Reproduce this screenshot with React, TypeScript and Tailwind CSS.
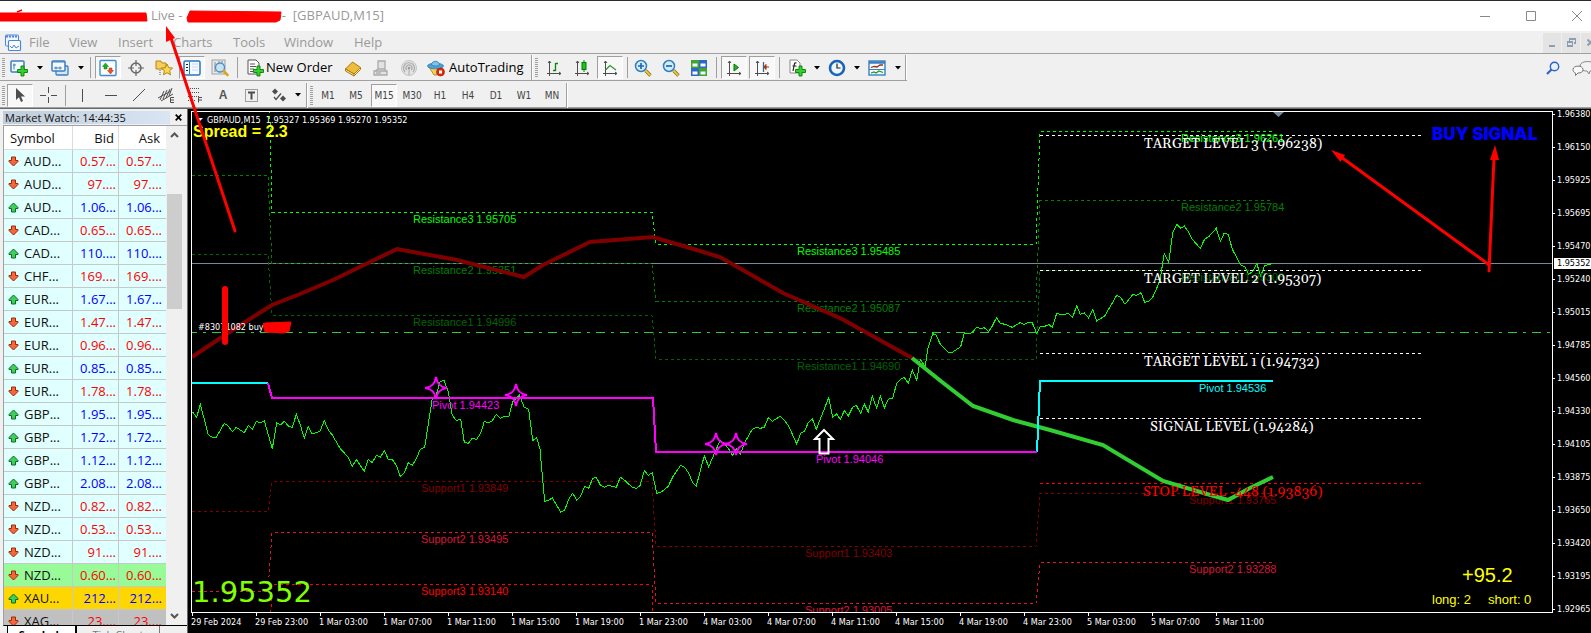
import type { ReactNode } from 'react';

type Pt = [number, number];

const GRAY = '#4d4d4d';

/* ---------- toolbar primitives ---------- */

function Icon({ children, size = 18 }: { children: ReactNode; size?: number }) {
  return (
    <svg width={size} height={size} viewBox="0 0 18 18" fill="none" className="shrink-0" aria-hidden="true">
      {children}
    </svg>
  );
}

function Tool({ label, pressed, children }: { label: string; pressed?: boolean; children: ReactNode }) {
  return (
    <button
      type="button"
      aria-label={label}
      className={
        pressed
          ? 'mx-px flex h-[23px] w-[26px] shrink-0 items-center justify-center border border-r-white border-b-white border-l-[#a0a0a0] border-t-[#a0a0a0] bg-[#f8f8f8]'
          : 'flex h-[23px] w-7 shrink-0 items-center justify-center'
      }
    >
      {children}
    </button>
  );
}

function Caret() {
  return (
    <svg width="6" height="4" viewBox="0 0 6 4" className="shrink-0" aria-hidden="true">
      <path d="M0 0h6L3 3.5z" fill="#000" />
    </svg>
  );
}

function Handle() {
  return (
    <svg width="3" height="19" viewBox="0 0 3 19" className="shrink-0" shapeRendering="crispEdges" aria-hidden="true">
      <path d="M1.5 0v19" stroke="#a0a0a0" strokeWidth="3" strokeDasharray="1 1" />
    </svg>
  );
}

function Sep() {
  return <div className="mx-[3px] h-[21px] w-px shrink-0 bg-[#a0a0a0]" />;
}

function Edge() {
  return <div className="h-[25px] w-[2px] shrink-0 border-l border-[#a0a0a0] bg-white" />;
}

/* ---------- icons ---------- */

const plus = 'M11 7h3v3.500h3.500v3H14V17h-3v-3.500H7.500v-3H11z';
const star4 = 'M0-11C1-4 4-1 11 0C4 1 1 4 0 11C-1 4-4 1-11 0C-4-1-1-4 0-11Z';

const NewChart = () => (
  <Icon>
    <rect x="1" y="2" width="13" height="11" rx="1" fill="#f4faff" stroke="#3b7fbf" strokeWidth="1.500" />
    <path d="M3 6h3M4 4.500v6" stroke="#3b7fbf" />
    <path d={plus} fill="#2fd42f" stroke="#0b7a0b" strokeWidth=".9" />
  </Icon>
);
const Profiles = () => (
  <Icon>
    <rect x="5" y="7" width="12" height="9" rx="1" fill="#d5e6f5" stroke="#3b7fbf" strokeWidth="1.300" />
    <rect x="1" y="2" width="13" height="10" rx="1" fill="#f4faff" stroke="#3b7fbf" strokeWidth="1.500" />
    <path d="M1 3h13M3 9h8M5 7.500v3M9 7.500v3" stroke="#3b7fbf" />
  </Icon>
);
const WatchIcon = () => (
  <Icon>
    <rect x="1" y="1.500" width="16" height="15" rx="1" fill="#fff" stroke="#3b8fd0" strokeWidth="1.400" />
    <path d="M3.500 7.500 6.500 4l3 3.500H8V10H5V7.500z" fill="#1fae1f" stroke="#0b7a0b" strokeWidth=".5" />
    <path d="M8.500 11.500H10V9h3v2.500h1.500l-3 3.500z" fill="#f0502a" stroke="#a03010" strokeWidth=".5" />
  </Icon>
);
const Target = () => (
  <Icon>
    <circle cx="9" cy="9" r="5" stroke="#666" strokeWidth="1.500" />
    <path d="M9 1v6M9 11v6M1 9h6M11 9h6" stroke="#666" strokeWidth="1.200" />
  </Icon>
);
const FolderStar = () => (
  <Icon>
    <path d="M1 2h5l1 2h4v6H1z" fill="#f5cf5a" stroke="#b8860b" />
    <path d="M5 11v6" stroke="#555" strokeDasharray="1 1" />
    <path d="m12 5 1.700 3.700 3.900.4-3 2.600.9 4.100L12 13.700l-3.500 2.100.9-4.100-3-2.600 3.900-.4z" fill="#ffd84a" stroke="#a87a10" strokeWidth=".9" />
  </Icon>
);
const NavIcon = () => (
  <Icon>
    <rect x="1" y="2" width="16" height="14" rx="1.500" fill="#f4faff" stroke="#2c75bb" strokeWidth="1.500" />
    <path d="M3 5.500h2M3 8.500h2M3 11.500h2" stroke="#222" />
    <path d="M6.500 3v12" stroke="#2c75bb" />
    <path d="M9 5h6M9 8h6M9 11h6" stroke="#c7dced" />
  </Icon>
);
const Tester = () => (
  <Icon>
    <rect x="1" y="1" width="13" height="14" fill="#e9e9e9" stroke="#a0a0a0" />
    <path d="M4 3v10M8 2v4M11 2v4" stroke="#888" />
    <circle cx="9" cy="8.500" r="4.500" fill="#bfe0f7" fillOpacity=".85" stroke="#4a90c8" strokeWidth="1.300" />
    <path d="m12.500 12 4 4" stroke="#d9a520" strokeWidth="2.500" strokeLinecap="round" />
  </Icon>
);
const OrderIcon = () => (
  <Icon>
    <path d="M2 1h8l3 3v11H2z" fill="#fff" stroke="#555" />
    <path d="M4 5h5M4 7.500h6M4 10h4M4 12.500h3" stroke="#555" />
    <path d={plus} fill="#2fd42f" stroke="#0b7a0b" strokeWidth=".9" />
  </Icon>
);
const BookIcon = () => (
  <Icon>
    <path d="m1.500 10 7-7 8 5.500-6.500 6.500z" fill="#f0bd3a" stroke="#a8760c" />
    <path d="M1.500 10v2l8.500 5v-2zM10 17l6.500-6.500v-2" fill="#fbe9b0" stroke="#a8760c" />
  </Icon>
);
const ServerIcon = () => (
  <Icon>
    <path d="M6 2h7v8H6zM2 12h13v4H2zM6 10l-3 2M13 10l1 2" fill="#e2e2e2" stroke="#aaa" strokeWidth="1.300" />
    <path d="M4 14h5" stroke="#999" />
  </Icon>
);
const SignalIcon = () => (
  <Icon>
    <circle cx="9" cy="9" r="7.500" fill="#e3e3e3" stroke="#c4c4c4" />
    <path d="M5 13a5.500 5.500 0 1 1 8 0M6.800 11a3 3 0 1 1 4.400 0" stroke="#aaa" strokeWidth="1.200" />
    <circle cx="9" cy="9" r="1.300" fill="#999" />
    <path d="M9 10v6" stroke="#aaa" />
  </Icon>
);
const AutoIcon = () => (
  <Icon>
    <path d="M2 8h13l-5 8H7z" fill="#f2cf55" stroke="#b8902a" />
    <ellipse cx="8.500" cy="7" rx="8" ry="2.800" fill="#4fa3d8" stroke="#2a78ad" strokeWidth=".8" />
    <path d="M4.500 6C4.500 1 12.500 1 12.500 6c-2 1.500-6 1.500-8 0z" fill="#7cc3ec" stroke="#2a78ad" strokeWidth=".8" />
    <circle cx="13.500" cy="13" r="4" fill="#e02a10" stroke="#a01500" strokeWidth=".6" />
    <rect x="12" y="11.500" width="3" height="3" fill="#fff" />
  </Icon>
);
const axes = 'M4.500 2v15M2 14.500h14M3 4l1.500-2L6 4M14 13l2 1.500-2 1.500';
const BarsIcon = () => (
  <Icon>
    <path d={axes} stroke={GRAY} />
    <path d="M10.500 4v8M10.500 4.500h2.500M8 11.500h2.500" stroke="#008a00" strokeWidth="1.300" />
  </Icon>
);
const CandleIcon = () => (
  <Icon>
    <path d={axes} stroke={GRAY} />
    <path d="M11 1v12" stroke="#008a00" />
    <rect x="9" y="3.500" width="4" height="7" fill="#22c322" stroke="#007a00" />
  </Icon>
);
const LineIcon = () => (
  <Icon>
    <path d={axes} stroke={GRAY} />
    <path d="M4.500 11 9 6.500 15 11" stroke="#2a9a2a" strokeWidth="1.300" />
  </Icon>
);
const Zoom = ({ plusSign }: { plusSign?: boolean }) => (
  <Icon>
    <circle cx="7" cy="7" r="5.500" fill="#d3ecfb" stroke="#2f7fc0" strokeWidth="1.500" />
    <path d={plusSign ? 'M4 7h6M7 4v6' : 'M4 7h6'} stroke="#2468a8" strokeWidth="1.700" />
    <path d="m11.500 11.500 5 5" stroke="#8a6a10" strokeWidth="3.200" />
    <path d="m11.500 11.500 4.800 4.800" stroke="#f0c840" strokeWidth="1.800" />
  </Icon>
);
const Tile = () => (
  <Icon>
    <rect x="1" y="1" width="8" height="8" fill="#3fa52c" />
    <rect x="9" y="1" width="8" height="8" fill="#2f66c8" />
    <rect x="1" y="9" width="8" height="8" fill="#2f66c8" />
    <rect x="9" y="9" width="8" height="8" fill="#3fa52c" />
    <path d="M2.500 4.500h5v3h-5zM10.500 4.500h5v3h-5zM2.500 12.500h5v3h-5zM10.500 12.500h5v3h-5z" fill="#f4faff" />
  </Icon>
);
const ScrollIcon = () => (
  <Icon>
    <path d={axes} stroke={GRAY} />
    <path d="M9 5v7l4.500-3.500z" fill="#22b522" stroke="#007a00" />
  </Icon>
);
const ShiftIcon = () => (
  <Icon>
    <path d={axes} stroke={GRAY} />
    <path d="M10.500 3v10" stroke="#2f66a8" strokeWidth="1.300" />
    <path d="M16 8h-3V5.500L11 8l2 2.500V8" fill="#c04010" stroke="#a03000" />
  </Icon>
);
const Indicators = () => (
  <Icon>
    <path d="M2 1h7l3 3v10H2z" fill="#fff" stroke="#888" />
    <path d="M8.500 4c-2-.5-2 0-2.500 3l-1 5M4.500 7h4" stroke="#222" strokeWidth="1.200" />
    <path d={plus} fill="#2fd42f" stroke="#0b7a0b" strokeWidth=".9" />
  </Icon>
);
const Clock = () => (
  <Icon>
    <circle cx="9" cy="9" r="7" fill="#eef6fc" stroke="#1763b8" strokeWidth="2.600" />
    <path d="M9 4.500V9h3.500" stroke="#222" strokeWidth="1.200" />
  </Icon>
);
const Template = () => (
  <Icon>
    <rect x="1" y="2" width="16" height="14" fill="#f4faff" stroke="#3b7fbf" strokeWidth="1.400" />
    <path d="M1 3.500h16" stroke="#3b7fbf" strokeWidth="2.500" />
    <path d="M1 10.500h16" stroke="#3b7fbf" />
    <path d="m3 8.500 3-1 3 .5 3-2h3" stroke="#a03010" strokeWidth="1.300" />
    <path d="m3 14 3-1 2 1 3-2 4 1.500" stroke="#1f9a1f" strokeWidth="1.300" />
  </Icon>
);

/* ---------- toolbars ---------- */

function StandardBar() {
  return (
    <div className="flex h-[26px] items-center border-b border-[#a0a0a0]">
      <div className="w-[2px] shrink-0" />
      <Handle />
      <Tool label="New chart"><NewChart /></Tool>
      <div className="flex w-[13px] justify-center"><Caret /></div>
      <Tool label="Profiles"><Profiles /></Tool>
      <div className="flex w-[13px] justify-center"><Caret /></div>
      <Sep />
      <Tool label="Market Watch" pressed><WatchIcon /></Tool>
      <Tool label="Data Window"><Target /></Tool>
      <Tool label="Navigator"><FolderStar /></Tool>
      <Tool label="Terminal" pressed><NavIcon /></Tool>
      <Tool label="Strategy Tester"><Tester /></Tool>
      <Sep />
      <button type="button" className="flex h-[23px] w-[98px] shrink-0 items-center gap-[2px] pl-[5px] text-[13px] text-black">
        <OrderIcon />
        <span className="whitespace-nowrap">New Order</span>
      </button>
      <Tool label="MetaEditor"><BookIcon /></Tool>
      <Tool label="Virtual Hosting"><ServerIcon /></Tool>
      <Tool label="Signals"><SignalIcon /></Tool>
      <button type="button" className="flex h-[23px] w-[108px] shrink-0 items-center gap-1 pl-[4px] text-[13px] text-black">
        <AutoIcon />
        <span className="whitespace-nowrap">AutoTrading</span>
      </button>
      <Edge />
      <div className="w-[2px] shrink-0" />
      <Handle />
      <div className="w-[2px] shrink-0" />
      <Tool label="Bar Chart"><BarsIcon /></Tool>
      <Tool label="Candlesticks"><CandleIcon /></Tool>
      <Tool label="Line Chart" pressed><LineIcon /></Tool>
      <div className="ml-[3px] mr-px h-[21px] w-px shrink-0 bg-[#a0a0a0]" />
      <Tool label="Zoom In"><Zoom plusSign /></Tool>
      <Tool label="Zoom Out"><Zoom /></Tool>
      <Tool label="Tile Windows"><Tile /></Tool>
      <Sep />
      <Tool label="Auto Scroll" pressed><ScrollIcon /></Tool>
      <Tool label="Chart Shift" pressed><ShiftIcon /></Tool>
      <Sep />
      <Tool label="Indicators"><Indicators /></Tool>
      <div className="flex w-[12px] justify-center"><Caret /></div>
      <Tool label="Periods"><Clock /></Tool>
      <div className="flex w-[12px] justify-center"><Caret /></div>
      <Tool label="Templates"><Template /></Tool>
      <div className="flex w-[14px] justify-center"><Caret /></div>
      <Edge />
    </div>
  );
}

const frames = ['M1', 'M5', 'M15', 'M30', 'H1', 'H4', 'D1', 'W1', 'MN'];

function LineStudiesBar() {
  return (
    <div className="flex h-[26px] items-center pt-[2px]">
      <div className="w-[2px] shrink-0" />
      <Handle />
      <div className="w-px shrink-0" />
      <Tool label="Cursor" pressed>
        <Icon><path d="M5 2v12l3-2.700 2 4.700 2-1-2-4.500h4z" fill={GRAY} /></Icon>
      </Tool>
      <Tool label="Crosshair">
        <Icon><path d="M9.500 1v6M9.500 11v6M1 9.500h6M12 9.500h6" stroke={GRAY} /></Icon>
      </Tool>
      <Sep />
      <Tool label="Vertical Line"><Icon><path d="M8.500 3v13" stroke={GRAY} /></Icon></Tool>
      <Tool label="Horizontal Line"><Icon><path d="M3 9.500h12" stroke={GRAY} /></Icon></Tool>
      <Tool label="Trendline"><Icon><path d="M3 15 15 3" stroke={GRAY} /></Icon></Tool>
      <Tool label="Equidistant Channel">
        <Icon>
          <path d="M0 12 13 5M3 15 15 8M2 14l4-9M5 13l4-9M8 12l4-9M11 10l3-8" stroke={GRAY} />
          <path d="M16 11.500h-3.500v5H16M12.500 14H16" stroke={GRAY} />
        </Icon>
      </Tool>
      <Tool label="Fibonacci Retracement">
        <Icon>
          <path d="M2 2.500h12M2 6.500h12M2 10.500h12M2 14.500h8" stroke={GRAY} strokeDasharray="1 1" />
          <path d="M16 11.500h-3.500v5M12.500 14H16" stroke={GRAY} />
        </Icon>
      </Tool>
      <Tool label="Text">
        <span className="font-['Liberation_Sans'] text-[12px] font-bold text-[#555]">A</span>
      </Tool>
      <Tool label="Text Label">
        <Icon>
          <rect x="3.500" y="3.500" width="12" height="12" stroke={GRAY} strokeDasharray="1 1" />
          <path d="M6 6.500h7M9.500 6.500v7" stroke={GRAY} strokeWidth="2" />
        </Icon>
      </Tool>
      <Tool label="Arrows">
        <Icon>
          <path d="m2 5.500 3-3 3 3-3 3zM10 12.500l3-3 3 3-3 3z" fill={GRAY} />
          <path d="m4 11 2 2.500 5-6" stroke={GRAY} strokeWidth="1.300" />
        </Icon>
      </Tool>
      <div className="flex w-[9px] shrink-0 justify-center"><Caret /></div>
      <div className="w-1 shrink-0" />
      <Edge />
      <div className="w-[2px] shrink-0" />
      <Handle />
      <div className="w-px shrink-0" />
      {frames.map((f) => (
        <Tool key={f} label={f} pressed={f === 'M15'}>
          <span className="font-['DejaVu_Sans_Condensed','Noto_Sans',sans-serif] text-[10px] text-[#444]">{f}</span>
        </Tool>
      ))}
      <Edge />
    </div>
  );
}

/* ---------- market watch ---------- */

const quotes: [string, string, string, 'up' | 'down', string?][] = [
  ['AUD...', '0.57...', '0.57...', 'down'],
  ['AUD...', '97....', '97....', 'down'],
  ['AUD...', '1.06...', '1.06...', 'up'],
  ['CAD...', '0.65...', '0.65...', 'down'],
  ['CAD...', '110....', '110....', 'up'],
  ['CHF...', '169....', '169....', 'down'],
  ['EUR...', '1.67...', '1.67...', 'up'],
  ['EUR...', '1.47...', '1.47...', 'down'],
  ['EUR...', '0.96...', '0.96...', 'down'],
  ['EUR...', '0.85...', '0.85...', 'up'],
  ['EUR...', '1.78...', '1.78...', 'down'],
  ['GBP...', '1.95...', '1.95...', 'up'],
  ['GBP...', '1.72...', '1.72...', 'up'],
  ['GBP...', '1.12...', '1.12...', 'up'],
  ['GBP...', '2.08...', '2.08...', 'up'],
  ['NZD...', '0.82...', '0.82...', 'down'],
  ['NZD...', '0.53...', '0.53...', 'down'],
  ['NZD...', '91....', '91....', 'down'],
  ['NZD...', '0.60...', '0.60...', 'down', 'bg-[#98fb98]'],
  ['XAU...', '212...', '212...', 'up', 'bg-[#ffd700]'],
  ['XAG...', '23....', '23....', 'down', 'bg-[#c0c0c0]'],
];

function Direction({ up }: { up: boolean }) {
  return (
    <svg width="11" height="11" viewBox="0 0 11 11" className="shrink-0" aria-hidden="true">
      {up ? (
        <path d="M5.500 1 10 5.500v1H7.500V10h-4V6.500H1v-1z" fill="#3ccf5c" stroke="#0a6b22" strokeWidth="1" />
      ) : (
        <path d="M5.500 10 1 5.500v-1h2.500V1h4v3.500H10v1z" fill="#f5673a" stroke="#9c2a08" strokeWidth="1" />
      )}
    </svg>
  );
}

function MarketWatch() {
  return (
    <aside className="flex w-[188px] shrink-0 flex-col overflow-hidden border-r border-[#696969] bg-[#f0f0f0] pl-[3px]">
      <div className="flex h-4 shrink-0 items-center justify-between pr-[2px]">
        <h2 className="h-[13px] w-[167px] whitespace-nowrap bg-linear-to-r from-[#bfcddb] to-[#d9e5f2] pl-[2px] text-[11px] leading-[13px] text-[#111]">
          Market Watch: 14:44:35
        </h2>
        <button type="button" aria-label="Close Market Watch" className="mr-px flex h-3 w-3 items-center justify-center">
          <svg width="7" height="7" viewBox="0 0 7 7"><path d="m.7.7 5.600 5.600M6.300.7.7 6.300" stroke="#000" strokeWidth="1.700" /></svg>
        </button>
      </div>
      <div className="flex min-h-0 flex-1 border-b border-l border-t border-b-black border-l-[#a0a0a0] border-t-[#a0a0a0]">
        <div className="w-[162px] shrink-0 overflow-hidden">
          <table className="w-full table-fixed border-separate border-spacing-0 text-[13px] leading-[22px]">
            <thead>
              <tr className="bg-white text-[#111]">
                <th className="h-6 w-[69px] border-b border-r border-[#dcdcdc] p-0 pl-[6px] text-left font-normal">Symbol</th>
                <th className="h-6 w-[46px] border-b border-r border-[#dcdcdc] p-0 pr-1 text-right font-normal">Bid</th>
                <th className="h-6 border-b border-[#dcdcdc] p-0 pr-[6px] text-right font-normal">Ask</th>
              </tr>
            </thead>
            <tbody>
              {quotes.map(([sym, bid, ask, dir, bg], i) => (
                <tr key={i} className={bg ?? 'bg-[#e0ffff]'}>
                  <td className="h-[23px] border-b border-r border-[#c8c8c8] p-0">
                    <div className="flex items-center gap-1 pl-1 text-[#111]">
                      <Direction up={dir === 'up'} />
                      <span className="pl-px">{sym}</span>
                    </div>
                  </td>
                  <td className={dir === 'up' ? 'border-b border-r border-[#c8c8c8] p-0 pr-[2px] text-right text-[#0000ff]' : 'border-b border-r border-[#c8c8c8] p-0 pr-[2px] text-right text-[#ff0000]'}>{bid}</td>
                  <td className={dir === 'up' ? 'border-b border-[#c8c8c8] p-0 pr-1 text-right text-[#0000ff]' : 'border-b border-[#c8c8c8] p-0 pr-1 text-right text-[#ff0000]'}>{ask}</td>
                </tr>
              ))}
            </tbody>
          </table>
        </div>
        <div className="flex w-[17px] flex-col items-center justify-between py-[6px]">
          <svg width="9" height="6" viewBox="0 0 9 6" fill="none"><path d="m1 5 3.500-3.500L8 5" stroke="#555" strokeWidth="2" /></svg>
          <div className="mt-[56px] h-[115px] w-[15px] bg-[#cdcdcd]" />
          <div className="flex-1" />
          <svg width="9" height="6" viewBox="0 0 9 6" fill="none"><path d="M1 1l3.500 3.500L8 1" stroke="#555" strokeWidth="2" /></svg>
        </div>
      </div>
      <div className="flex h-[7px] shrink-0 pl-1 text-[11px] leading-[18px]">
        <div className="h-5 w-[70px] border-l border-r-2 border-black bg-white text-center font-bold text-black">Symbols</div>
        <div className="h-5 w-[83px] border-r border-[#777] text-center text-[#777]">Tick Chart</div>
      </div>
    </aside>
  );
}

/* ---------- chart ---------- */

const prices = ['1.96380', '1.96150', '1.95925', '1.95695', '1.95470', '1.95240', '1.95015', '1.94785', '1.94560', '1.94330', '1.94105', '1.93875', '1.93650', '1.93420', '1.93195', '1.92965'];

const times = ['29 Feb 2024', '29 Feb 23:00', '1 Mar 03:00', '1 Mar 07:00', '1 Mar 11:00', '1 Mar 15:00', '1 Mar 19:00', '1 Mar 23:00', '4 Mar 03:00', '4 Mar 07:00', '4 Mar 11:00', '4 Mar 15:00', '4 Mar 19:00', '4 Mar 23:00', '5 Mar 03:00', '5 Mar 07:00', '5 Mar 11:00'];

const AXIS_FONT = "'DejaVu Sans Condensed', 'Noto Sans', sans-serif";
const ARIAL = "'Liberation Sans', Arial, sans-serif";
const SERIF = "Gelasio, 'Liberation Serif', serif";

/* Series samples are stored at three units per pixel, relative to a block origin. */
const series: { x: number; y: number; pts: Pt[] }[] = [
  {
    x: 0, y: 370,
    pts: [[577,125],[590,142],[601,103],[625,194],[637,202],[649,202],[673,160],[685,168],[697,185],[709,172],[733,188],[745,166],[757,178],[769,154],[781,158],[793,152],[817,236],[830,158],[841,165],[853,154],[865,168]],
  },
  {
    x: 290, y: 370,
    pts: [[7,172],[19,133],[31,165],[43,205],[55,170],[67,192],[90,184],[103,152],[115,180],[127,195],[151,236],[175,262],[187,290],[199,268],[223,304],[235,268],[247,278],[259,256],[271,262],[283,242],[295,268],[307,268],[319,286],[331,319],[343,308],[355,278],[367,286],[379,266],[391,238],[404,232],[427,85],[439,75],[450,36],[462,30],[475,66],[487,136],[499,151],[512,148],[523,217],[535,220],[547,205],[560,208],[572,190],[583,154],[595,158],[607,152],[619,133],[631,145],[643,139],[656,141],[668,96],[688,75],[703,112],[716,118],[728,212],[740,203],[750,238],[764,394],[776,391],[787,383],[812,427],[824,420],[836,388],[848,370],[860,391],[872,378],[884,349],[896,355],[908,325],[919,322],[931,345],[943,352],[955,346],[979,352],[991,322],[1003,330],[1027,352],[1040,355],[1050,347],[1063,302],[1075,316],[1087,308],[1100,370],[1112,367]],
  },
  {
    x: 660, y: 370,
    pts: [[24,350],[40,318],[62,286],[74,292],[86,310],[98,338],[109,348],[133,257],[146,290],[157,265],[180,212],[192,220],[205,235],[218,257],[229,235],[241,253],[253,220],[277,178],[289,172],[301,175],[313,172],[325,143],[337,154],[360,139],[372,150],[385,166],[410,222],[422,190],[433,184],[445,158],[457,146],[469,178],[506,83],[518,142],[530,132],[541,148],[553,122],[565,138],[578,111],[589,106],[602,130]],
  },
  {
    x: 850, y: 200,
    pts: [[43,612],[55,636],[67,588],[80,625],[91,588],[103,624],[115,598],[128,594],[140,550],[152,538],[163,532],[175,550],[187,510],[200,541],[211,478],[225,500],[235,440],[248,401],[258,405],[272,435],[295,457],[307,457],[332,440],[343,398],[356,402],[368,396],[380,382],[392,386],[403,383],[416,395],[427,378],[440,352],[450,370],[465,373],[487,382],[510,368],[522,373],[535,367],[547,368],[560,400],[571,380],[584,379],[597,374],[607,382],[620,340],[632,344],[656,341],[668,352],[680,317],[691,343],[703,339],[716,354],[728,328],[740,363],[764,348],[800,286],[812,292],[825,313],[848,284],[860,286],[873,278],[884,307],[896,304],[908,292],[920,265],[930,240],[943,160],[956,188],[968,98],[980,73],[992,85],[1003,78],[1015,95],[1027,118],[1051,145],[1064,117],[1076,110],[1099,85],[1111,124],[1123,99],[1135,103],[1147,148],[1159,170],[1171,194],[1184,200],[1196,222],[1208,215],[1220,190],[1232,228],[1244,196],[1258,194],[1265,190]],
  },
];

const pricePath = series
  .flatMap((s) => s.pts.map(([x, y]) => `${(s.x + x / 3).toFixed(1)},${(s.y + y / 3).toFixed(1)}`))
  .join(' ');

const levels: { color: string; ys: [number, number, number, number]; labels: [string, number, number][] }[] = [
  { color: '#00ff00', ys: [30, 212, 244, 131], labels: [['Resistance3 1.95705', 413, 223], ['Resistance3 1.95485', 797, 255], ['Resistance3 1.96261', 1181, 142]] },
  { color: '#008000', ys: [175, 263, 301, 200], labels: [['Resistance2 1.95351', 413, 274], ['Resistance2 1.95087', 797, 312], ['Resistance2 1.95784', 1181, 211]] },
  { color: '#006400', ys: [254, 315, 359, 270], labels: [['Resistance1 1.94996', 413, 326], ['Resistance1 1.94690', 797, 370], ['Resistance1 1.95308', 1181, 281]] },
  { color: '#800000', ys: [511, 481, 546, 493], labels: [['Support1 1.93849', 421, 492], ['Support1 1.93403', 805, 557], ['Support1 1.93765', 1189, 504]] },
  { color: '#dc143c', ys: [591, 532, 603, 562], labels: [['Support2 1.93495', 421, 543], ['Support2 1.93005', 805, 614], ['Support2 1.93288', 1189, 573]] },
  { color: '#ff0000', ys: [680, 584, 700, 680], labels: [['Support3 1.93140', 421, 595]] },
];

const targets: [string, string, number, number][] = [
  ['TARGET LEVEL 3 (1.96238)', '#ffffff', 1144, 135],
  ['TARGET LEVEL 2 (1.95307)', '#ffffff', 1144, 270],
  ['TARGET LEVEL 1 (1.94732)', '#ffffff', 1144, 353],
  ['SIGNAL LEVEL (1.94284)', '#ffffff', 1150, 418],
  ['STOP LEVEL -448 (1.93836)', '#ff0000', 1143, 483],
];

const stars: Pt[] = [[436, 388], [516, 395], [716, 444], [736, 444]];

function Plot() {
  return (
    <svg className="block h-full w-full" role="img" aria-label="GBPAUD M15 line chart">
      <g transform="translate(-192 -112)" fill="none">
        <g shapeRendering="crispEdges">
          <path d="M192 263.500H3000" stroke="#778899" />
          <path d="M192 332.500H3000" stroke="#32cd32" strokeDasharray="9 6 3 6" strokeDashoffset="4" />
          {levels.map(({ color, ys: [a, b, c, d] }) => (
            <path
              key={color}
              d={`M192 ${a}.5H268L272 ${b}.5H652L656 ${c}.5H1036L1040 ${d}.5H1273`}
              stroke={color}
              strokeDasharray="3 3"
            />
          ))}
          {targets.map(([t, color, , y]) => (
            <path key={t} d={`M1040 ${y}.5H1422`} stroke={color} strokeDasharray="3 3" />
          ))}
          <polyline points={pricePath} stroke="#00ff00" />
        </g>

        <g fontFamily={ARIAL} fontSize="11">
          {levels.flatMap(({ color, labels }) =>
            labels.map(([t, x, y]) => (
              <text key={t} x={x} y={y} fill={color}>{t}</text>
            )),
          )}
        </g>

        <polyline points="192,357 225,335 272,305 300,294 333,280 397,249 457,260 524,277 543,265 590,242 653,237 690,248 720,257 783,293 842,319 912,358" stroke="#800000" strokeWidth="4" />
        <polyline points="912,358 942,382 973,406 1013,420 1050,430 1103,445 1163,481 1207,494 1228,500 1250,488 1273,477" stroke="#32cd32" strokeWidth="4" />
        <g strokeWidth="2" shapeRendering="crispEdges">
          <path d="M192 383H268M1037 452L1040 381H1273" stroke="#00ffff" />
          <path d="M268 383L272 398H653L656 452H1037" stroke="#ff00ff" />
        </g>
        {stars.map(([x, y]) => (
          <path key={x} d={star4} transform={`translate(${x} ${y})`} stroke="#ff00ff" strokeWidth="2" />
        ))}
        <path d="M824 430l9 9h-4.500v14.500h-9V439H815z" stroke="#fff" strokeWidth="2" />

        <g fontFamily={ARIAL} fontSize="11">
          <text x="432" y="409" fill="#ff00ff">Pivot 1.94423</text>
          <text x="816" y="463" fill="#ff00ff">Pivot 1.94046</text>
          <text x="1199" y="392" fill="#00ffff">Pivot 1.94536</text>
        </g>
        <g fontFamily={SERIF} fontSize="14">
          {targets.map(([t, color, x, y]) => (
            <text key={t} x={x} y={y + 13} fill={color}>{t}</text>
          ))}
        </g>

        <path d="M1273 112h11l-5.500 5z" fill="#778899" />
        <path d="M197 118h6l-3 3z" fill="#fff" />
        <text x="207" y="123" fill="#fff" fontFamily={AXIS_FONT} fontSize="9" xmlSpace="preserve">GBPAUD,M15  1.95327 1.95369 1.95270 1.95352</text>
        <text x="193" y="137" fill="#ffff00" fontFamily={ARIAL} fontSize="16" fontWeight="700">Spread = 2.3</text>
        <text x="198" y="330" fill="#fff" fontFamily={AXIS_FONT} fontSize="9">#83071082 buy</text>
        <text x="192" y="602" fill="#7fff00" fontFamily="'DejaVu Sans', sans-serif" fontSize="29">1.95352</text>
        <text x="1432" y="140" fill="#0000ff" fontFamily="Inter, sans-serif" fontSize="17" fontWeight="900">BUY SIGNAL</text>
        <g fill="#ffff00" fontFamily={ARIAL}>
          <text x="1462" y="582" fontSize="20">+95.2</text>
          <text x="1432" y="604" fontSize="13">long: 2</text>
          <text x="1488" y="604" fontSize="13">short: 0</text>
        </g>
      </g>
    </svg>
  );
}

function Chart() {
  return (
    <main className="flex min-w-0 flex-1 overflow-hidden bg-black pl-[3px] font-['DejaVu_Sans_Condensed','Noto_Sans',sans-serif] text-[9px] text-white">
      <div className="flex min-w-0 flex-1 flex-col pt-[2px]">
        <div className="min-h-0 flex-1 overflow-hidden border-b border-l border-t border-white">
          <Plot />
        </div>
        <div className="flex h-5 shrink-0 overflow-hidden">
          {times.map((t) => (
            <div key={t} className="relative flex w-16 shrink-0 flex-col whitespace-nowrap">
              <span className="ml-px h-[3px] w-px bg-white" />
              <span className="leading-[12px]">{t}</span>
            </div>
          ))}
        </div>
      </div>
      <div className="relative flex w-[39px] shrink-0 flex-col overflow-hidden">
        <div className="absolute bottom-5 left-0 top-[2px] w-px bg-white" />
        {prices.map((p) => (
          <div key={p} className="flex h-[33px] shrink-0 items-start">
            <span className="mt-[5px] h-px w-[3px] shrink-0 bg-white" />
            <span className="ml-[2px] leading-[11px]">{p}</span>
          </div>
        ))}
        <div className="absolute left-[2px] right-0 top-[149px] h-[11px] bg-white pl-[3px] leading-[11px] text-black">1.95352</div>
      </div>
    </main>
  );
}

/* ---------- annotations ---------- */

function Annotations() {
  return (
    <svg className="pointer-events-none absolute inset-0 h-full w-full" aria-hidden="true">
      <g fill="#ff0000" stroke="#ff0000">
        <path d="M0 12h146l1 8H0zM190 10l91 1-1 8-4 2h-88l-1-4z" />
        <path d="M17 11l5-2" strokeWidth="1.500" />
        <path d="M263 323l2-1 26-1-2 9-5 2-19-1z" />
        <path d="M225 288v53" strokeWidth="6" strokeLinecap="round" />
        <g strokeWidth="3" strokeLinecap="round">
          <path d="M171 37l64 193" />
          <path d="M1341 156l147 107" />
          <path d="M1494 157l-5 113" />
        </g>
        <g strokeWidth="0">
          <path d="M166 25l9 12-9 4z" />
          <path d="M1331 149l14 5-4.500 7z" />
          <path d="M1495 144l4 15h-9z" />
        </g>
      </g>
    </svg>
  );
}

/* ---------- window ---------- */

const menus: [string, string][] = [
  ['File', 'w-10'],
  ['View', 'w-[49px]'],
  ['Insert', 'w-[55px]'],
  ['Charts', 'w-[60px]'],
  ['Tools', 'w-[51px]'],
  ['Window', 'w-[70px]'],
  ['Help', 'w-10'],
];

export default function App() {
  return (
    <div className="relative flex h-screen flex-col overflow-hidden border-t border-[#2b2b2b] bg-[#f0f0f0] font-['Open_Sans','Noto_Sans',sans-serif]">
      <header className="flex h-[30px] shrink-0 items-center bg-white text-[#999]">
        <h1 className="flex-1 whitespace-nowrap pl-[151px] text-[13px]">
          Live -<span className="inline-block w-[107px] text-right">-&nbsp;</span> [GBPAUD,M15]
        </h1>
        <div className="flex items-center gap-9 pr-[9px]">
          <button type="button" aria-label="Minimize"><svg width="10" height="10" viewBox="0 0 10 10" className="block"><path d="M0 5.500h10" stroke="#888" /></svg></button>
          <button type="button" aria-label="Maximize"><svg width="10" height="10" viewBox="0 0 10 10" className="block"><path d="M.5.5h9v9h-9z" fill="none" stroke="#888" /></svg></button>
          <button type="button" aria-label="Close"><svg width="10" height="10" viewBox="0 0 10 10" className="block"><path d="m0 0 10 10M10 0 0 10" stroke="#888" /></svg></button>
        </div>
      </header>

      <nav className="flex h-[23px] shrink-0 items-center border-b border-[#a0a0a0] pt-px text-[13px] text-[#999]">
        <div className="flex w-[29px] shrink-0 pl-1">
          <Icon>
            <rect x="1.500" y="1" width="13" height="11" rx="1" fill="#eef5ff" stroke="#4a86d8" />
            <path d="M2 2.500h12" stroke="#4a86d8" strokeWidth="2" strokeDasharray="2 1" />
            <rect x="4.500" y="6.500" width="12" height="10" rx="1" fill="#fff" stroke="#4a86d8" strokeWidth="1.200" />
            <path d="m6 12 2 2 2-3 2 3 3-2" stroke="#4a86d8" />
          </Icon>
        </div>
        {menus.map(([m, w]) => (
          <button key={m} type="button" className={`${w} shrink-0 text-left`}>{m}</button>
        ))}
        <div className="ml-auto flex w-12 gap-px overflow-hidden">
          <button type="button" aria-label="Minimize chart" className="flex h-5 w-[18px] shrink-0 items-end justify-center bg-[#e4e4e4] pb-[6px]">
            <span className="h-[2px] w-[6px] bg-[#8c9fb0]" />
          </button>
          <button type="button" aria-label="Restore chart" className="flex h-5 w-[18px] shrink-0 items-center justify-center bg-[#e4e4e4]">
            <svg width="9" height="9" viewBox="0 0 9 9" fill="none" shapeRendering="crispEdges"><path d="M2.500 3V1h6v4H7M.5 4h5v4h-5zM.5 4.500h5" stroke="#8c9fb0" strokeWidth="1.500" /></svg>
          </button>
          <button type="button" aria-label="Close chart" className="flex h-5 w-[18px] shrink-0 items-center justify-center bg-[#e4e4e4]">
            <svg width="7" height="7" viewBox="0 0 7 7"><path d="m.5.5 6 6M6.500.5l-6 6" stroke="#8c9fb0" strokeWidth="2" /></svg>
          </button>
        </div>
      </nav>

      <div className="flex shrink-0 border-b border-[#a0a0a0] pt-px">
        <div>
          <StandardBar />
          <LineStudiesBar />
        </div>
        <div className="ml-auto flex h-[26px] w-[45px] items-center gap-3 overflow-hidden">
          <button type="button" aria-label="Search" className="shrink-0">
            <svg width="14" height="14" viewBox="0 0 14 14" fill="none" className="block"><circle cx="8.500" cy="5.500" r="4.200" fill="#e8f1fc" stroke="#2f62c8" strokeWidth="1.400" /><path d="m5.500 8.500-4.500 4.500" stroke="#2f62c8" strokeWidth="2.200" /></svg>
          </button>
          <button type="button" aria-label="Chat" className="shrink-0">
            <svg width="24" height="16" viewBox="0 0 24 16" className="block"><path d="M8 6c0-6 15-6 15 0 0 4-3 5-5 5l-1 3-2-3c-4 0-7-1-7-5z" fill="#f2f2f2" stroke="#888" /><path d="M1 9.500C1 5 11 5 11 9.500c0 2.500-2 3.500-5 3.500l-2.500 2.500V13C2 12.500 1 11.500 1 9.500z" fill="#fafafa" stroke="#777" /></svg>
          </button>
        </div>
      </div>

      <div className="flex min-h-0 flex-1 border-t border-[#696969]">
        <MarketWatch />
        <Chart />
      </div>
      <Annotations />
    </div>
  );
}
